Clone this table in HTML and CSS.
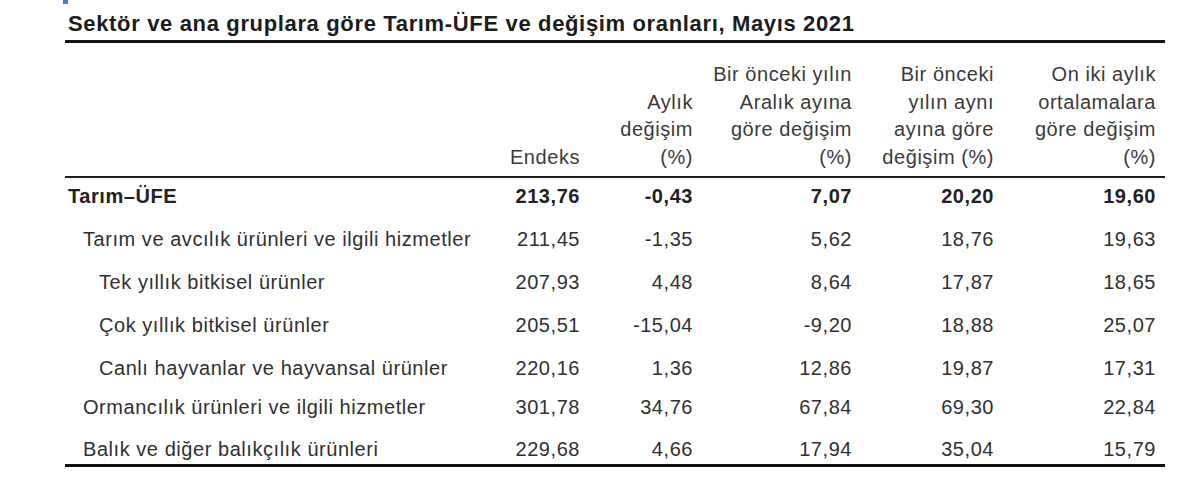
FILE: index.html
```html
<!DOCTYPE html>
<html lang="tr">
<head>
<meta charset="utf-8">
<title>Tarım-ÜFE</title>
<link rel="stylesheet" href="styles.css">
</head>
<body>
<div class="page">
  <div class="mark"></div>
  <h1 class="title">Sektör ve ana gruplara göre Tarım-ÜFE ve değişim oranları, Mayıs 2021</h1>
  <table class="data">
    <colgroup>
      <col class="c-label">
      <col class="c-idx">
      <col class="c-m">
      <col class="c-dec">
      <col class="c-y">
      <col class="c-avg">
    </colgroup>
    <thead>
      <tr>
        <th></th>
        <th>Endeks</th>
        <th>Aylık<br>değişim<br>(%)</th>
        <th>Bir önceki yılın<br>Aralık ayına<br>göre değişim<br>(%)</th>
        <th>Bir önceki<br>yılın aynı<br>ayına göre<br>değişim (%)</th>
        <th>On iki aylık<br>ortalamalara<br>göre değişim<br>(%)</th>
      </tr>
    </thead>
    <tbody>
      <tr class="total">
        <td class="lbl l0">Tarım–ÜFE</td>
        <td>213,76</td><td>-0,43</td><td>7,07</td><td>20,20</td><td>19,60</td>
      </tr>
      <tr>
        <td class="lbl l1">Tarım ve avcılık ürünleri ve ilgili hizmetler</td>
        <td>211,45</td><td>-1,35</td><td>5,62</td><td>18,76</td><td>19,63</td>
      </tr>
      <tr>
        <td class="lbl l2">Tek yıllık bitkisel ürünler</td>
        <td>207,93</td><td>4,48</td><td>8,64</td><td>17,87</td><td>18,65</td>
      </tr>
      <tr>
        <td class="lbl l2">Çok yıllık bitkisel ürünler</td>
        <td>205,51</td><td>-15,04</td><td>-9,20</td><td>18,88</td><td>25,07</td>
      </tr>
      <tr>
        <td class="lbl l2">Canlı hayvanlar ve hayvansal ürünler</td>
        <td>220,16</td><td>1,36</td><td>12,86</td><td>19,87</td><td>17,31</td>
      </tr>
      <tr>
        <td class="lbl l1">Ormancılık ürünleri ve ilgili hizmetler</td>
        <td>301,78</td><td>34,76</td><td>67,84</td><td>69,30</td><td>22,84</td>
      </tr>
      <tr>
        <td class="lbl l1">Balık ve diğer balıkçılık ürünleri</td>
        <td>229,68</td><td>4,66</td><td>17,94</td><td>35,04</td><td>15,79</td>
      </tr>
    </tbody>
  </table>
</div>
</body>
</html>
```

FILE: styles.css
```css
html, body {
  margin: 0;
  padding: 0;
  background: #ffffff;
}

.page {
  width: 1100px;
  margin-left: 65px;
  font-family: "Liberation Sans", Arial, sans-serif;
  color: #333333;
}

.mark {
  width: 5px;
  height: 4px;
  margin-left: -2px;
  background: #3d7fd8;
}

.title {
  margin: 6px 0 0 0;
  padding: 0 0 2px 3px;
  font-size: 22px;
  line-height: 28px;
  font-weight: bold;
  letter-spacing: 0.65px;
  color: #1c1c1c;
  border-bottom: 3px solid #151515;
}

.data {
  width: 1100px;
  border-collapse: collapse;
  table-layout: fixed;
  margin-top: 18px;
  font-size: 20px;
  letter-spacing: 0.55px;
}

.c-label { width: 415px; }
.c-idx { width: 100px; }
.c-m { width: 113px; }
.c-dec { width: 159px; }
.c-y { width: 142px; }
.c-avg { width: 171px; }

.data th {
  font-weight: normal;
  text-align: right;
  vertical-align: bottom;
  line-height: 27.5px;
  padding: 0 0 5px 0;
  color: #3a3a3a;
  white-space: nowrap;
}

.data thead tr {
  border-bottom: 2px solid #1e1e1e;
}

.data td {
  text-align: right;
  line-height: 24px;
  padding: 19px 0 0 0;
  white-space: nowrap;
  color: #303030;
}

.data th:last-child,
.data td:last-child {
  padding-right: 9px;
}

.data td.lbl {
  text-align: left;
}

.l0 { padding-left: 3px !important; }
.l1 { padding-left: 18px !important; }
.l2 { padding-left: 34px !important; }

.data tr.total td {
  padding-top: 6px;
  font-weight: bold;
  color: #222222;
}

.data tbody tr:nth-child(6) td {
  padding-top: 15px;
}

.data tbody tr:nth-child(7) td {
  padding-top: 18px;
  padding-bottom: 3px;
}

.data tbody tr:last-child {
  border-bottom: 3px solid #111111;
}
```
